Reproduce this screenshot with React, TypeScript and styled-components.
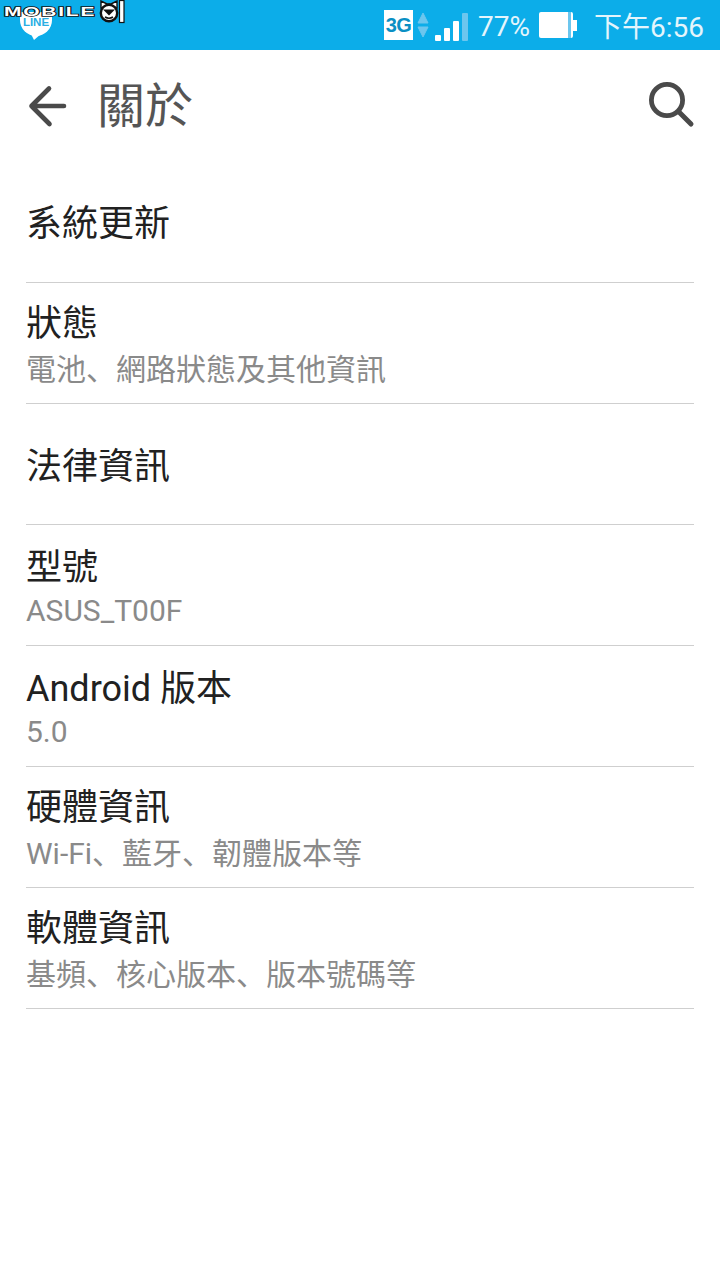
import React from "react";
import styled, { createGlobalStyle } from "styled-components";

const CJK = `"Noto Sans CJK TC", "Noto Sans CJK SC", sans-serif`;
const LATIN = `Roboto, "Noto Sans CJK TC", sans-serif`;

const GlobalStyle = createGlobalStyle`
  html, body {
    margin: 0;
    padding: 0;
    background: #ffffff;
  }
`;

const items = [
  { title: "系統更新" },
  { title: "狀態", sub: "電池、網路狀態及其他資訊" },
  { title: "法律資訊" },
  { title: "型號", sub: "ASUS_T00F" },
  { title: "Android 版本", sub: "5.0" },
  { title: "硬體資訊", sub: "Wi-Fi、藍牙、韌體版本等" },
  { title: "軟體資訊", sub: "基頻、核心版本、版本號碼等" },
];

// the comma sits bottom-left in the original font, TC centres it
const withComma = (text: string) =>
  text.split("、").map((part, i) => (
    <React.Fragment key={i}>
      {i > 0 && <Comma>、</Comma>}
      {part}
    </React.Fragment>
  ));

const App: React.FC = () => {
  return (
    <Page>
      <GlobalStyle />
      <StatusBar>
        <Notifications>
          <LogoRow>
            <LogoText>MOBILE</LogoText>
            <svg width="26" height="24" viewBox="0 0 26 24">
              <path d="M2 8 L2 1 L8 4 H12 L18 1 L18 8 Z" fill="#fff" stroke="#111" strokeWidth="1.4" />
              <circle cx="10" cy="13" r="8.2" fill="#fff" stroke="#111" strokeWidth="2.4" />
              <path d="M4 9.5 H16 L10 15.5 Z" fill="#111" />
              <path d="M6 17 Q10 19.5 14 17" fill="none" stroke="#111" strokeWidth="1.6" />
              <rect x="20.5" y="0.5" width="4.5" height="22" fill="#fff" stroke="#111" strokeWidth="1.2" />
            </svg>
          </LogoRow>
          <LineBubble>
            <LineText>LINE</LineText>
            <LineTail />
          </LineBubble>
        </Notifications>
        <StatusRight>
          <NetworkBadge>3G</NetworkBadge>
          <svg width="12" height="28" viewBox="0 0 12 28">
            <path d="M6 2 L11 12 H1 Z" fill="#6cc6ee" stroke="#6cc6ee" strokeLinejoin="round" />
            <path d="M6 26 L11 16 H1 Z" fill="#6cc6ee" stroke="#6cc6ee" strokeLinejoin="round" />
          </svg>
          <SignalBars>
            <SignalBar $height={6} />
            <SignalBar $height={13} />
            <SignalBar $height={20} />
            <SignalBar $height={28} $dim />
          </SignalBars>
          <Percent>77%</Percent>
          <BatteryBody>
            <BatteryEmpty />
          </BatteryBody>
          <BatteryCap />
          <Clock>下午6:56</Clock>
        </StatusRight>
      </StatusBar>
      <ActionBar>
        <svg width="48" height="48" viewBox="0 0 48 48">
          <path
            d="M41 25 H8.5 M26 7.5 L8.5 25 L26.5 43"
            fill="none"
            stroke="#4a4a4a"
            strokeWidth="4.6"
            strokeLinecap="round"
            strokeLinejoin="round"
          />
        </svg>
        <Title>關於</Title>
        <svg width="50" height="50" viewBox="0 0 50 50">
          <circle cx="21" cy="20" r="15.6" fill="none" stroke="#4a4a4a" strokeWidth="4.8" />
          <path d="M33 32 L45 44" fill="none" stroke="#4a4a4a" strokeWidth="5" strokeLinecap="round" />
        </svg>
      </ActionBar>
      <List>
        {items.map((item) => (
          <Row key={item.title}>
            <RowTitle>{item.title}</RowTitle>
            {item.sub && <RowSub>{withComma(item.sub)}</RowSub>}
          </Row>
        ))}
      </List>
    </Page>
  );
};

const Page = styled.div`
  width: 720px;
  height: 1280px;
  background: #fff;
  overflow: hidden;
`;

const StatusBar = styled.div`
  height: 50px;
  background: #0cade9;
  display: flex;
  justify-content: space-between;
  padding-right: 16px;
`;

const Notifications = styled.div`
  position: relative;
  width: 130px;
`;

const LogoRow = styled.div`
  display: flex;
  align-items: center;
  height: 24px;
  padding-left: 4px;
  position: relative;
  z-index: 1;
`;

const LogoText = styled.span`
  font-family: "Liberation Sans", sans-serif;
  font-weight: 700;
  font-size: 12px;
  line-height: 9px;
  color: #fff;
  letter-spacing: 1px;
  transform: scaleX(1.75);
  transform-origin: left center;
  width: 95px;
  -webkit-text-stroke: 1.5px #111;
  paint-order: stroke fill;
`;

const LineBubble = styled.div`
  position: absolute;
  left: 20px;
  top: 12px;
  width: 32px;
  height: 24px;
  background: #fff;
  border-radius: 0 0 16px 16px;
  display: flex;
  justify-content: center;
  padding-top: 6px;
  box-sizing: border-box;
`;

const LineText = styled.span`
  font-family: "Liberation Sans", sans-serif;
  font-weight: 700;
  font-size: 11.5px;
  line-height: 9px;
  color: #2aaee3;
`;

const LineTail = styled.div`
  position: absolute;
  left: 11px;
  top: 22px;
  width: 0;
  height: 0;
  border-left: 3px solid transparent;
  border-right: 7px solid transparent;
  border-top: 6px solid #fff;
`;

const StatusRight = styled.div`
  display: flex;
  align-items: center;
  height: 50px;
`;

const NetworkBadge = styled.div`
  width: 29px;
  height: 30px;
  background: #fff;
  color: #0b8fc4;
  font-family: "Liberation Sans", sans-serif;
  font-weight: 700;
  font-size: 20px;
  line-height: 30px;
  text-align: center;
  margin-right: 4px;
  letter-spacing: -0.5px;
`;

const SignalBars = styled.div`
  display: flex;
  align-items: flex-end;
  gap: 3px;
  height: 28px;
  margin: 4px 0 0 6px;
`;

const SignalBar = styled.div<{ $height: number; $dim?: boolean }>`
  width: 6px;
  height: ${(props) => props.$height}px;
  background: ${(props) => (props.$dim ? "#6cc6ee" : "#fff")};
  border-radius: 1px;
`;

const Percent = styled.span`
  font-family: ${LATIN};
  font-size: 28px;
  color: #e4f5fc;
  margin: 2px 0 0 10px;
`;

const BatteryBody = styled.div`
  width: 32px;
  height: 26px;
  background: #fff;
  border-radius: 2px;
  margin-left: 9px;
  display: flex;
  justify-content: flex-end;
  padding-right: 2px;
`;

const BatteryEmpty = styled.div`
  width: 3px;
  background: #6cc6ee;
`;

const BatteryCap = styled.div`
  width: 4px;
  height: 11px;
  background: #fff;
`;

const Clock = styled.span`
  font-family: ${LATIN};
  font-size: 28px;
  color: #e4f5fc;
  margin-left: 17px;
`;

const ActionBar = styled.div`
  height: 110px;
  display: flex;
  align-items: center;
  padding: 0 24px 0 23px;
`;

const Title = styled.div`
  font-family: ${CJK};
  font-size: 48px;
  line-height: 60px;
  color: #555;
  margin: -6px 0 0 26px;
  flex: 1;
`;

const List = styled.div`
  padding: 0 26px;
`;

const Row = styled.div`
  height: 121px;
  border-bottom: 1px solid #cfcfcf;
  box-sizing: border-box;
  display: flex;
  flex-direction: column;
  justify-content: center;
  padding-top: 6px;
  &:first-child {
    height: 123px;
  }
`;

const RowTitle = styled.div`
  font-family: ${LATIN};
  font-size: 36px;
  line-height: 44px;
  color: #212121;
`;

const RowSub = styled.div`
  font-family: ${LATIN};
  font-size: 30px;
  line-height: 40px;
  margin-top: 1px;
  color: #8a8a8a;
`;

const Comma = styled.span`
  font-family: "Noto Sans CJK SC", sans-serif;
`;

export default App;
